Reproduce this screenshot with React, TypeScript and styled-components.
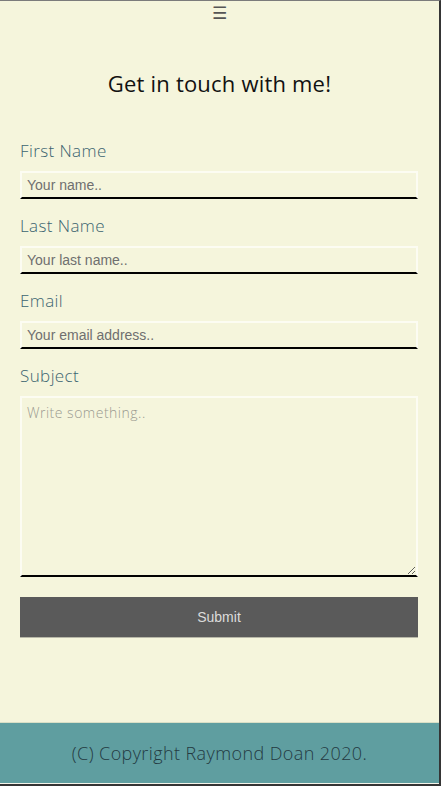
import React from "react";
import styled, { createGlobalStyle } from "styled-components";

const Global = createGlobalStyle`
  html, body { margin: 0; padding: 0; background: #f5f5dc; }
  * { box-sizing: border-box; }
`;

const Frame = styled.div`
  width: 441px;
  height: 786px;
  display: flex;
  flex-direction: column;
  background: #f5f5dc;
  border-top: 1px solid #7b7b7b;
  border-right: 2px solid #353535;
  border-bottom: 2px solid #353535;
  font-family: "Open Sans", "Liberation Sans", sans-serif;
`;

const Nav = styled.div`
  height: 24px;
  display: flex;
  justify-content: center;
  align-items: center;
  color: #555;
  font-family: "DejaVu Sans", sans-serif;
  font-size: 17px;
  line-height: 24px;
`;

const Title = styled.h1`
  margin: 43px 0 0;
  text-align: center;
  font-size: 22px;
  line-height: 30px;
  font-weight: 400;
  letter-spacing: 0.2px;
  color: #111;
`;

const Form = styled.form`
  display: flex;
  flex-direction: column;
  padding: 41px 21px 0 20px;
`;

const Label = styled.label`
  display: block;
  font-size: 17px;
  line-height: 24px;
  font-weight: 300;
  letter-spacing: 0.4px;
  color: #3b6470;
  margin-bottom: 8px;
`;

const fieldBase = `
  width: 100%;
  background: transparent;
  border: 2px solid #fcfcf2;
  border-bottom: 2px solid #000;
  outline: none;
  margin: 0;
`;

const Input = styled.input`
  ${fieldBase}
  height: 28px;
  padding: 0 5px;
  margin-bottom: 15px;
  font-family: "Liberation Sans", Arial, sans-serif;
  font-size: 14px;
  color: #333;
  &::placeholder { color: #6f6f6f; }
`;

const TextArea = styled.textarea`
  ${fieldBase}
  display: block;
  height: 181px;
  padding: 5px 5px;
  font-family: "Open Sans", sans-serif;
  font-weight: 300;
  font-size: 14px;
  letter-spacing: 0.5px;
  line-height: 20px;
  resize: vertical;
  &::placeholder { color: #9a9a90; }
`;

const Submit = styled.button`
  margin-top: 20px;
  height: 41px;
  width: 100%;
  background: #5a5a5a;
  border: none;
  border-bottom: 1px solid #b8b8a8;
  color: #dcdcdc;
  font-family: "Liberation Sans", Arial, sans-serif;
  font-size: 14px;
  cursor: pointer;
`;

const Spacer = styled.div`
  flex: 1;
`;

const Footer = styled.footer`
  height: 62px;
  background: #5f9ea0;
  border-top: 1px solid #d9dfc6;
  border-bottom: 1px solid #f4f4ea;
  display: flex;
  align-items: center;
  justify-content: center;
  font-size: 18px;
  font-weight: 300;
  letter-spacing: 0.4px;
  color: #243a42;
`;

export default function App() {
  return (
    <>
      <Global />
      <Frame>
        <Nav>☰</Nav>
        <Title>Get in touch with me!</Title>
        <Form onSubmit={(e) => e.preventDefault()}>
          <Label htmlFor="fname">First Name</Label>
          <Input id="fname" placeholder="Your name.." />
          <Label htmlFor="lname">Last Name</Label>
          <Input id="lname" placeholder="Your last name.." />
          <Label htmlFor="email">Email</Label>
          <Input id="email" placeholder="Your email address.." />
          <Label htmlFor="subject">Subject</Label>
          <TextArea id="subject" placeholder="Write something.." />
          <Submit type="submit">Submit</Submit>
        </Form>
        <Spacer />
        <Footer>(C) Copyright Raymond Doan 2020.</Footer>
      </Frame>
    </>
  );
}
